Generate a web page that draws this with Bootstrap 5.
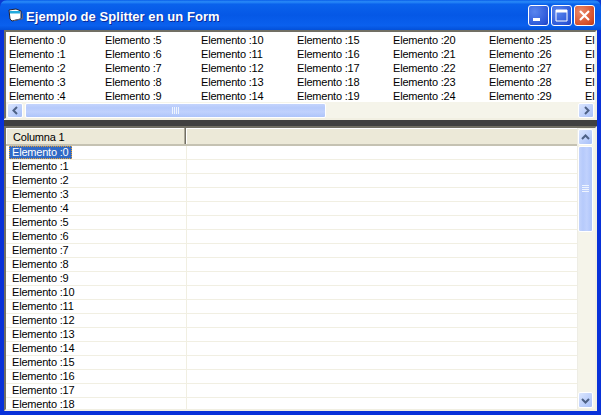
<!DOCTYPE html>
<html lang="es">
<head>
<meta charset="utf-8">
<title>Ejemplo de Splitter en un Form</title>
<link href="https://cdn.jsdelivr.net/npm/bootstrap@5.3.0/dist/css/bootstrap.min.css" rel="stylesheet">
<style>
html,body{margin:0;padding:0;width:601px;height:415px;overflow:hidden;background:#0a3ad0}
body{font-family:"Liberation Sans",Arial,sans-serif;font-size:11px;color:#000;line-height:14px;letter-spacing:-.2px}
.win{width:601px;height:415px;background:#0831d9;border-radius:7px 7px 0 0;overflow:hidden}
.ttl{height:30px;background:linear-gradient(180deg,#0a5de8 0,#2a8cf8 6%,#0a62ec 14%,#0558e6 50%,#0a60ee 85%,#0350d8 100%);color:#fff;padding:0 6px 0 8px;flex:none}
.ttl-txt{font:bold 13px "Liberation Sans",Arial,sans-serif;letter-spacing:.05px;margin-left:2px;padding-top:2px;text-shadow:1px 1px 0 #0a2a9a}
.capbtns{gap:2px}
.capbtn{width:21px;height:21px;border:1px solid #fff;border-radius:3px;background:radial-gradient(circle at 30% 30%,#5a86ee,#2b57d8 75%,#1c3cc0);display:flex;align-items:center;justify-content:center}
.capbtn.cl{background:radial-gradient(circle at 30% 30%,#ea8a6a,#d8502a 70%,#b83a18)}
.cli{margin:0 4px 4px 4px;height:381px;background:#ece9d8;min-height:0}
.pane-top{height:89px;flex:none;border-top:2px solid #716f64;border-left:2px solid #716f64;border-right:2px solid #f1efe2;border-bottom:1px solid #f1efe2;background:#fff;overflow:hidden}
.cols{height:70px;flex:none;overflow:hidden;padding:1px 0 0 3px;white-space:nowrap}
.lb-col{width:96px;flex:none}
.lb-col div{height:14px}
.hbar{height:16px;flex:none;background:#f5f4ea;padding:1px 1px 0 1px}
.sbtn{width:16px;height:15px;flex:none;border:1px solid #fff;border-radius:2px;background:linear-gradient(135deg,#dbe6fe,#bccffb 60%,#a8c0f8);display:flex;align-items:center;justify-content:center}
.hthumb{width:301px;margin-left:2px;border:1px solid #fff;border-radius:2px;background:linear-gradient(180deg,#c4d4fc,#b6cafb 30%,#c0d1fd 60%,#aec4fa);display:flex;align-items:center;justify-content:center}
.split{height:7px;flex:none;background:linear-gradient(180deg,#f1efe2 0,#f1efe2 1px,#404040 1px,#404040 100%)}
.pane-bot{flex:1 1 0;min-height:0;border-top:2px solid #716f64;border-left:2px solid #716f64;border-right:2px solid #f1efe2;border-bottom:2px solid #f1efe2;background:#fff;overflow:hidden}
.lv{flex:1 1 0;min-width:0;overflow:hidden}
.lv-hd{height:18px;flex:none;background:#ece9d8;border-bottom:2px solid #c5c2b2}
.hcell1{width:180px;flex:none;padding:2px 0 0 7px;border-right:1px solid #716f64;box-shadow:inset -1px 0 0 #aca899,inset 1px 1px 0 #fff;height:16px}
.hcell2{flex:1 1 0;box-shadow:inset 1px 1px 0 #fff}
.lv-row{height:14px;border-bottom:1px solid #f1efe2;overflow:hidden;flex:none;padding-left:6px;line-height:13px;white-space:nowrap}
.lv-body{flex:1 1 0;min-height:0;overflow:hidden;position:relative}
.vline{position:absolute;left:180px;top:0;bottom:0;width:1px;background:#f1efe2}
.sel{display:inline-block;background:#316ac5;color:#fff;outline:1px dotted #e8a030;outline-offset:-1px;margin-left:-3px;padding:0 3px;height:13px}
.vbar{width:18px;flex:none;background:#f5f4ea;padding:1px 1px 1px 0;border-left:1px solid #eeede5}
.vbar .sbtn{width:15px;height:16px}
.vthumb{height:86px;margin-top:1px;flex:none;border:1px solid #fff;border-radius:2px;background:linear-gradient(90deg,#c4d4fc,#b6cafb 30%,#c0d1fd 60%,#aec4fa);display:flex;align-items:center;justify-content:center;width:15px}
.vfill{flex:1 1 0}
</style>
</head>
<body>
<div class="win d-flex flex-column">
  <div class="ttl d-flex align-items-center">
    <svg width="16" height="14" viewBox="0 0 16 14"><path d="M1 2l7-1 5 2v8l-9 2-2-2z" fill="#fff" stroke="#223" stroke-width="1"/><path d="M2 3l10 0v2.5H2z" fill="#2ad"/><path d="M14 5l1 1v5l-9 2v-1l8-2z" fill="#667"/></svg>
    <span class="ttl-txt">Ejemplo de Splitter en un Form</span>
    <div class="ms-auto d-flex capbtns">
      <div class="capbtn"><svg width="15" height="15" viewBox="0 0 15 15"><rect x="2" y="10" width="7" height="3" fill="#fff"/></svg></div>
      <div class="capbtn"><svg width="15" height="15" viewBox="0 0 15 15"><path d="M2 2h11v11H2z" fill="none" stroke="#fff"/><rect x="2" y="2" width="11" height="2.5" fill="#fff"/></svg></div>
      <div class="capbtn cl"><svg width="15" height="15" viewBox="0 0 15 15"><path d="M3 3l9 9M12 3l-9 9" stroke="#fff" stroke-width="2.2" fill="none"/></svg></div>
    </div>
  </div>
  <div class="cli d-flex flex-column">
    <div class="pane-top d-flex flex-column">
      <div class="cols d-flex" id="cols"></div>
      <div class="hbar d-flex">
        <div class="sbtn"><svg width="9" height="9" viewBox="0 0 9 9"><path d="M6 1L2.5 4.5 6 8" fill="none" stroke="#4d6185" stroke-width="2"/></svg></div>
        <div class="hthumb"><svg width="8" height="7" viewBox="0 0 8 7"><path d="M.5 0v7M2.5 0v7M4.5 0v7M6.5 0v7" stroke="#eef4fe"/></svg></div>
        <div class="sbtn ms-auto"><svg width="9" height="9" viewBox="0 0 9 9"><path d="M3 1l3.5 3.5L3 8" fill="none" stroke="#4d6185" stroke-width="2"/></svg></div>
      </div>
    </div>
    <div class="split"></div>
    <div class="pane-bot d-flex">
      <div class="lv d-flex flex-column">
        <div class="lv-hd d-flex">
          <div class="hcell1">Columna 1</div>
          <div class="hcell2"></div>
        </div>
        <div class="lv-body d-flex flex-column" id="rows"><div class="vline"></div></div>
      </div>
      <div class="vbar d-flex flex-column">
        <div class="sbtn"><svg width="9" height="9" viewBox="0 0 9 9"><path d="M1 6l3.5-3.5L8 6" fill="none" stroke="#4d6185" stroke-width="2"/></svg></div>
        <div class="vthumb"><svg width="7" height="8" viewBox="0 0 7 8"><path d="M0 .5h7M0 2.5h7M0 4.5h7M0 6.5h7" stroke="#eef4fe"/></svg></div>
        <div class="vfill"></div>
        <div class="sbtn"><svg width="9" height="9" viewBox="0 0 9 9"><path d="M1 3l3.5 3.5L8 3" fill="none" stroke="#4d6185" stroke-width="2"/></svg></div>
      </div>
    </div>
  </div>
</div>
<script src="https://cdn.jsdelivr.net/npm/bootstrap@5.3.0/dist/js/bootstrap.bundle.min.js"></script>
<script>
var c=document.getElementById('cols'),h='';
for(var i=0;i<7;i++){h+='<div class="lb-col">';for(var j=0;j<5;j++){h+='<div>'+(i==6?'El':'Elemento :'+(i*5+j))+'</div>';}h+='</div>';}
c.innerHTML=h;
var r=document.getElementById('rows'),s='';
for(var k=0;k<19;k++){s+='<div class="lv-row">'+(k==0?'<span class="sel">Elemento :0</span>':'Elemento :'+k)+'</div>';}
r.insertAdjacentHTML('beforeend',s);
</script>
</body>
</html>
